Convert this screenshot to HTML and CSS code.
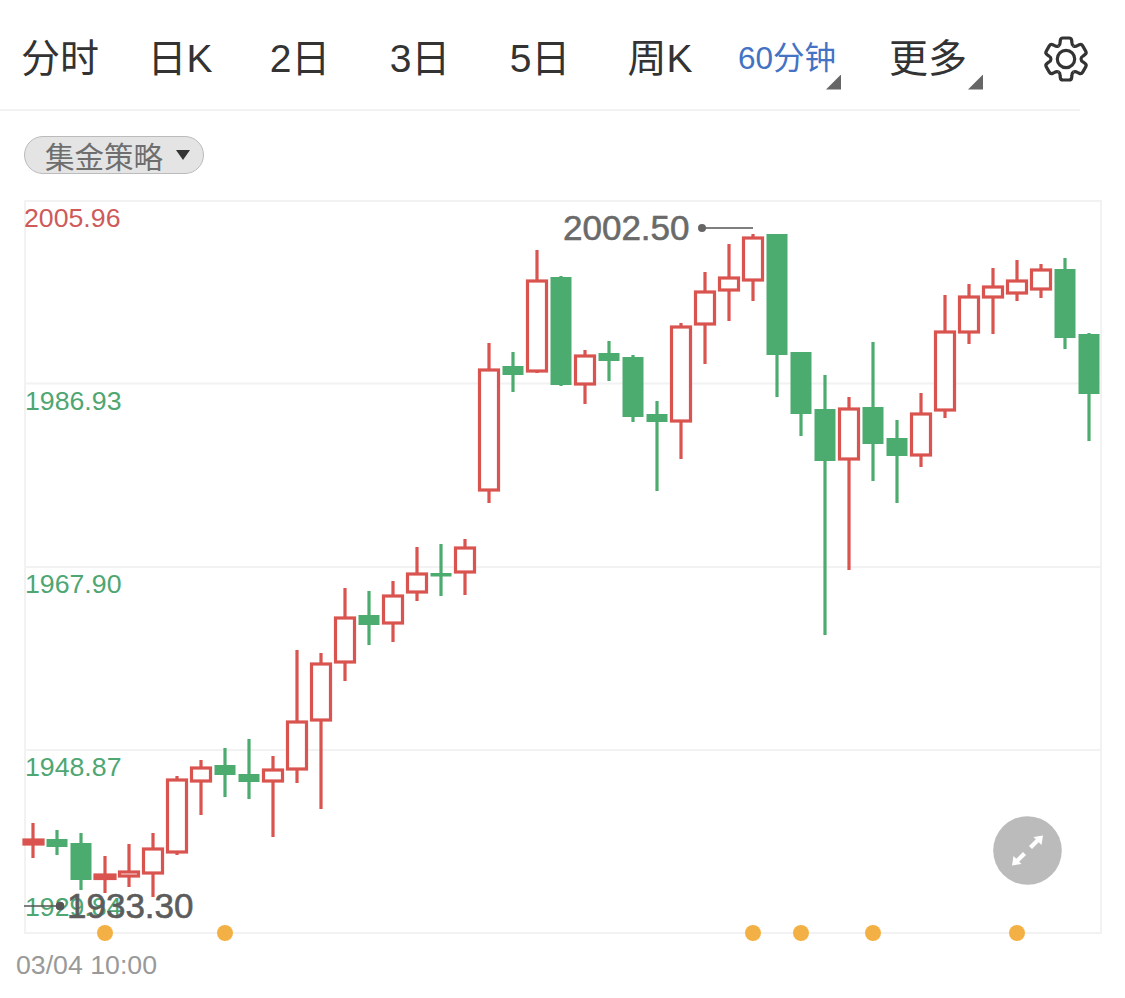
FILE: index.html
```html
<!DOCTYPE html>
<html lang="zh">
<head>
<meta charset="utf-8">
<title>60分钟K线</title>
<link rel="stylesheet" href="styles.css">
</head>
<body>
<nav class="tabs">
  <span class="tab">分时</span>
  <span class="tab">日K</span>
  <span class="tab">2日</span>
  <span class="tab">3日</span>
  <span class="tab">5日</span>
  <span class="tab">周K</span>
  <span class="tab tab-active">60分钟<i class="corner"></i></span>
  <span class="tab tab-more">更多<i class="corner"></i></span>
  <svg class="gear" viewBox="-24 -24 48 48">
    <defs><path id="tooth" d="M-7.500 -13 Q-5.800 -14 -5.900 -16.500 L-5.700 -18.500 Q-5.500 -21 -3 -21 L3 -21 Q5.500 -21 5.700 -18.500 L5.900 -16.500 Q5.800 -14 7.500 -13"/></defs>
    <circle r="8.700"/>
    <use href="#tooth"/>
    <use href="#tooth" transform="rotate(60)"/>
    <use href="#tooth" transform="rotate(120)"/>
    <use href="#tooth" transform="rotate(180)"/>
    <use href="#tooth" transform="rotate(240)"/>
    <use href="#tooth" transform="rotate(300)"/>
  </svg>
</nav>
<div class="pill">集金策略<i class="caret"></i></div>
<svg class="chart" viewBox="0 200 1125 798">
  <rect class="frame" x="25" y="201" width="1076" height="732"/>
  <line class="grid" x1="24" x2="1101" y1="383.5" y2="383.5"/>
  <line class="grid" x1="24" x2="1101" y1="567" y2="567"/>
  <line class="grid" x1="24" x2="1101" y1="750" y2="750"/>

  <text class="axis axis-red" x="24" y="227">2005.96</text>
  <text class="axis axis-green" x="25" y="410">1986.93</text>
  <text class="axis axis-green" x="25" y="593">1967.90</text>
  <text class="axis axis-green" x="25" y="776">1948.87</text>
  <text class="axis axis-green" x="25" y="916">1929.84</text>

  <g class="up"><line x1="33" x2="33" y1="823" y2="858"/><rect class="solid" x="24" y="840" width="19" height="4"/></g>
  <g class="dn"><line x1="57" x2="57" y1="830" y2="855"/><rect x="46.5" y="839" width="21" height="8"/></g>
  <g class="dn"><line x1="81" x2="81" y1="833" y2="890"/><rect x="70.5" y="843" width="21" height="37"/></g>
  <g class="up"><line x1="105" x2="105" y1="856" y2="893"/><rect class="solid" x="95" y="875" width="20" height="3.5"/></g>
  <g class="up"><line x1="129" x2="129" y1="844" y2="887"/><rect x="119.5" y="872" width="19" height="4"/></g>
  <g class="up"><line x1="153" x2="153" y1="833" y2="897"/><rect x="143.5" y="849" width="19" height="24"/></g>
  <g class="up"><line x1="177" x2="177" y1="776" y2="855"/><rect x="167.5" y="780" width="19" height="72"/></g>
  <g class="up"><line x1="201" x2="201" y1="760" y2="815"/><rect x="191.5" y="768" width="19" height="13"/></g>
  <g class="dn"><line x1="225" x2="225" y1="748" y2="797"/><rect x="214.5" y="765" width="21" height="10"/></g>
  <g class="dn"><line x1="249" x2="249" y1="739" y2="799"/><rect x="238.5" y="774" width="21" height="8"/></g>
  <g class="up"><line x1="273" x2="273" y1="756" y2="837"/><rect x="263.5" y="770" width="19" height="11"/></g>
  <g class="up"><line x1="297" x2="297" y1="650" y2="783"/><rect x="287.5" y="722" width="19" height="47"/></g>
  <g class="up"><line x1="321" x2="321" y1="653" y2="809"/><rect x="311.5" y="664" width="19" height="56"/></g>
  <g class="up"><line x1="345" x2="345" y1="588" y2="681"/><rect x="335.5" y="618" width="19" height="44"/></g>
  <g class="dn"><line x1="369" x2="369" y1="591" y2="645"/><rect x="358.5" y="615" width="21" height="10"/></g>
  <g class="up"><line x1="393" x2="393" y1="581" y2="642"/><rect x="383.5" y="596" width="19" height="27"/></g>
  <g class="up"><line x1="417" x2="417" y1="547" y2="601"/><rect x="407.5" y="574" width="19" height="18"/></g>
  <g class="dn"><line x1="441" x2="441" y1="544" y2="596"/><rect x="430.5" y="573" width="21" height="3.5"/></g>
  <g class="up"><line x1="465" x2="465" y1="539" y2="595"/><rect x="455.5" y="548" width="19" height="24"/></g>
  <g class="up"><line x1="489" x2="489" y1="343" y2="503"/><rect x="479.5" y="370" width="19" height="120"/></g>
  <g class="dn"><line x1="513" x2="513" y1="352" y2="392"/><rect x="502.5" y="366" width="21" height="9"/></g>
  <g class="up"><line x1="537" x2="537" y1="250" y2="373"/><rect x="527.5" y="281" width="19" height="90"/></g>
  <g class="dn"><line x1="561" x2="561" y1="276" y2="386"/><rect x="550.5" y="277" width="21" height="108"/></g>
  <g class="up"><line x1="585" x2="585" y1="350" y2="404"/><rect x="575.5" y="356" width="19" height="28"/></g>
  <g class="dn"><line x1="609" x2="609" y1="341" y2="381"/><rect x="598.5" y="353" width="21" height="8"/></g>
  <g class="dn"><line x1="633" x2="633" y1="355" y2="422"/><rect x="622.5" y="357" width="21" height="60"/></g>
  <g class="dn"><line x1="657" x2="657" y1="401" y2="491"/><rect x="646.5" y="414" width="21" height="8"/></g>
  <g class="up"><line x1="681" x2="681" y1="323" y2="459"/><rect x="671.5" y="327" width="19" height="94"/></g>
  <g class="up"><line x1="705" x2="705" y1="272" y2="364"/><rect x="695.5" y="292" width="19" height="32"/></g>
  <g class="up"><line x1="729" x2="729" y1="244" y2="321"/><rect x="719.5" y="278" width="19" height="12"/></g>
  <g class="up"><line x1="753" x2="753" y1="234" y2="301"/><rect x="743.5" y="238" width="19" height="42"/></g>
  <g class="dn"><line x1="777" x2="777" y1="234" y2="397"/><rect x="766.5" y="234" width="21" height="121"/></g>
  <g class="dn"><line x1="801" x2="801" y1="352" y2="436"/><rect x="790.5" y="352" width="21" height="62"/></g>
  <g class="dn"><line x1="825" x2="825" y1="375" y2="635"/><rect x="814.5" y="409" width="21" height="52"/></g>
  <g class="up"><line x1="849" x2="849" y1="397" y2="570"/><rect x="839.5" y="409" width="19" height="50"/></g>
  <g class="dn"><line x1="873" x2="873" y1="342" y2="481"/><rect x="862.5" y="407" width="21" height="37"/></g>
  <g class="dn"><line x1="897" x2="897" y1="420" y2="503"/><rect x="886.5" y="438" width="21" height="18"/></g>
  <g class="up"><line x1="921" x2="921" y1="393" y2="467"/><rect x="911.5" y="414" width="19" height="41"/></g>
  <g class="up"><line x1="945" x2="945" y1="295" y2="418"/><rect x="935.5" y="332" width="19" height="78"/></g>
  <g class="up"><line x1="969" x2="969" y1="284" y2="344"/><rect x="959.5" y="297" width="19" height="35"/></g>
  <g class="up"><line x1="993" x2="993" y1="268" y2="334"/><rect x="983.5" y="287" width="19" height="10"/></g>
  <g class="up"><line x1="1017" x2="1017" y1="260" y2="301"/><rect x="1007.5" y="281" width="19" height="12"/></g>
  <g class="up"><line x1="1041" x2="1041" y1="264" y2="298"/><rect x="1031.5" y="270" width="19" height="19"/></g>
  <g class="dn"><line x1="1065" x2="1065" y1="258" y2="349"/><rect x="1054.5" y="269" width="21" height="69"/></g>
  <g class="dn"><line x1="1089" x2="1089" y1="333" y2="441"/><rect x="1078.5" y="334" width="21" height="60"/></g>

  <line class="lead" x1="702" x2="753" y1="228" y2="228"/>
  <circle class="lead-dot" cx="702" cy="228" r="4"/>
  <text class="extreme" x="563" y="240">2002.50</text>
  <line class="lead lead-low" x1="24" x2="60" y1="906" y2="906"/>
  <circle class="lead-dot lead-low" cx="60" cy="906" r="4"/>
  <text class="extreme extreme-low" x="67" y="918">1933.30</text>

  <circle class="marker" cx="105" cy="933" r="8"/>
  <circle class="marker" cx="225" cy="933" r="8"/>
  <circle class="marker" cx="753" cy="933" r="8"/>
  <circle class="marker" cx="801" cy="933" r="8"/>
  <circle class="marker" cx="873" cy="933" r="8"/>
  <circle class="marker" cx="1017" cy="933" r="8"/>

  <circle class="zoom-bg" cx="1027.5" cy="850.5" r="34.3"/>
  <path class="zoom-arrow" d="M1043 835.500 L1041.500 845 L1038.700 842.200 L1032 849 L1029 846 L1035.800 839.200 L1033.500 837 Z"/>
  <path class="zoom-arrow" d="M1012 865.500 L1013.500 856 L1016.300 858.800 L1023 852 L1026 855 L1019.200 861.800 L1021.500 864 Z"/>

  <text class="time" x="16" y="974">03/04 10:00</text>
</svg>
</body>
</html>
```
FILE: styles.css
```css
html, body {
  margin: 0;
  padding: 0;
  background: #fff;
}
body {
  width: 1125px;
  height: 998px;
  overflow: hidden;
  font-family: "Liberation Sans", "Noto Sans CJK SC", sans-serif;
}
.tabs {
  display: flex;
  align-items: center;
  box-sizing: border-box;
  width: 1080px;
  height: 111px;
  border-bottom: 2px solid #f2f2f2;
  color: #333;
  font-size: 39px;
}
.tab {
  position: relative;
  flex: 0 0 120px;
  text-align: center;
}
.tab-active {
  flex-basis: 134px;
  color: #4472c4;
  font-size: 31.5px;
}
.tab-more {
  flex-basis: 148px;
}
.corner {
  position: absolute;
  width: 15px;
  height: 15px;
  background: #666;
  clip-path: polygon(100% 0, 100% 100%, 0 100%);
}
.tab-active .corner {
  left: 106px;
  top: 43px;
}
.tab-more .corner {
  left: 114px;
  top: 48px;
}
.gear {
  flex: 0 0 48px;
  width: 48px;
  height: 48px;
  margin: 8px 0 0 40px;
  fill: none;
  stroke: #333;
  stroke-width: 3.2;
  stroke-linejoin: round;
}
.pill {
  display: inline-flex;
  align-items: center;
  box-sizing: border-box;
  height: 38px;
  margin: 25px 0 0 24px;
  padding-left: 20px;
  width: 180px;
  border: 1px solid #bbb;
  border-radius: 19px;
  background: #e4e4e4;
  color: #6e6e6e;
  font-size: 29.5px;
  vertical-align: top;
}
.caret {
  width: 0;
  height: 0;
  margin-left: 13px;
  border-style: solid;
  border-width: 10px 7.5px 0;
  border-color: #333 transparent transparent;
}
.chart {
  display: block;
  width: 1125px;
  height: 798px;
  margin-top: 26px;
}
.frame {
  fill: #fff;
  stroke: #f2f2f2;
  stroke-width: 2;
}
.grid {
  stroke: #f2f2f2;
  stroke-width: 2;
}
.axis {
  font-size: 26.7px;
}
.axis-red {
  fill: #cf5a5a;
}
.axis-green {
  fill: #4ea673;
}
.up line {
  stroke: #d9534f;
  stroke-width: 3.2;
}
.up rect {
  fill: #fff;
  stroke: #d9534f;
  stroke-width: 3.2;
}
.up rect.solid {
  fill: #e0524f;
}
.dn line {
  stroke: #4cab6e;
  stroke-width: 3.2;
}
.dn rect {
  fill: #4cab6e;
}
.lead {
  stroke: #555;
  stroke-width: 1.4;
}
.lead-dot {
  fill: #666;
}
.lead-low {
  stroke: #555;
  fill: #555;
}
.extreme {
  fill: #6a6a6a;
  stroke: #6a6a6a;
  stroke-width: 0.6;
  font-size: 35px;
}
.extreme-low {
  fill: #5c5c5c;
  stroke: #5c5c5c;
}
.marker {
  fill: #f3b044;
}
.zoom-bg {
  fill: #bbb;
}
.zoom-arrow {
  fill: #fff;
}
.time {
  fill: #999;
  font-size: 26.7px;
}
```
